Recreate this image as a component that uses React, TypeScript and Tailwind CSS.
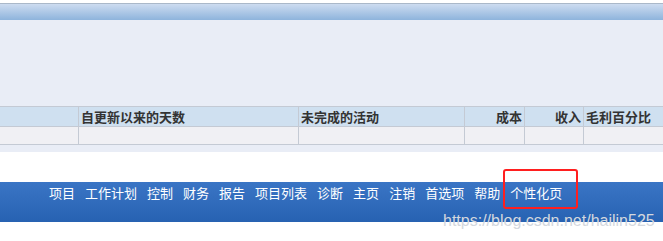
const NAV = ["项目", "工作计划", "控制", "财务", "报告", "项目列表", "诊断", "主页", "注销", "首选项", "帮助", "个性化页"];

const COLS = [
  { label: "", align: "text-left" },
  { label: "自更新以来的天数", align: "text-left" },
  { label: "未完成的活动", align: "text-left" },
  { label: "成本", align: "text-right" },
  { label: "收入", align: "text-right" },
  { label: "毛利百分比", align: "text-left" },
];

const CJK = { fontFamily: '"Noto Sans CJK SC", "Noto Sans", sans-serif' };

export default function App() {
  return (
    <div className="relative w-[663px] h-[241px] bg-white overflow-hidden" style={CJK}>
      {/* top header strip */}
      <div className="h-[3px] bg-white" />
      <div className="h-[17px] border-t border-[#aab8c9] bg-gradient-to-b from-[#cddcf0] to-[#8eb4dc]" />

      {/* empty panel */}
      <div className="h-[86px] bg-[#e9edf6]" />

      {/* table */}
      <div className="border-t border-[#c4cad4] bg-[#e9edf6]">
        <div className="grid grid-cols-[79px_220px_166px_60px_59px_79px] h-[20px] bg-[#cfe0f0] border-b border-[#c4cad4]">
          {COLS.map((c, i) => (
            <div
              key={i}
              className={`px-[2px] ${c.align} text-[13px] font-bold leading-[19px] text-[#333333] whitespace-nowrap ${i < COLS.length - 1 ? "border-r border-[#c4cad4]" : ""}`}
            >
              {c.label}
            </div>
          ))}
        </div>
        <div className="grid grid-cols-[79px_220px_166px_60px_59px_79px] h-[18px] bg-[#f0f0f4] border-b border-[#c4cad4]">
          {COLS.map((c, i) => (
            <div key={i} className={i < COLS.length - 1 ? "border-r border-[#c4cad4]" : ""} />
          ))}
        </div>
        <div className="h-[7px]" />
      </div>

      <div className="h-[30px] bg-white" />

      {/* bottom nav bar */}
      <div className="h-[40px] bg-gradient-to-b from-[#3a75c5] to-[#2762b2] pl-[49px] pt-[2px] flex gap-[10px]">
        {NAV.map((n) => (
          <span key={n} className="text-[13px] leading-[17px] text-white whitespace-nowrap">
            {n}
          </span>
        ))}
      </div>

      {/* highlight box */}
      <div className="absolute left-[503px] top-[169px] w-[75px] h-[40px] border-2 border-[#ff1f1f] rounded-[3px]" />

      {/* watermark */}
      <div
        className="absolute left-[443px] top-[211px] text-[16px] leading-[20px] text-[#d4d8de] whitespace-nowrap"
        style={{ fontFamily: '"Liberation Sans", Arial, sans-serif' }}
      >
        https://blog.csdn.net/hailin525
      </div>
    </div>
  );
}
